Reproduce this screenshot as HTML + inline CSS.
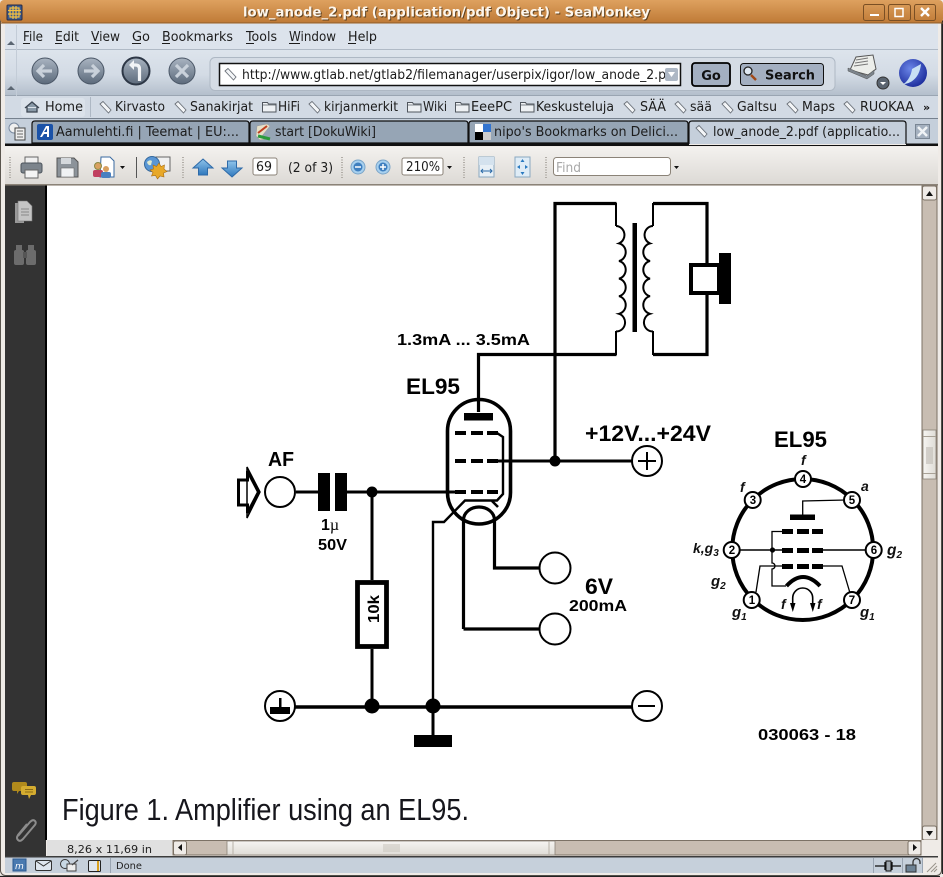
<!DOCTYPE html>
<html><head><meta charset="utf-8"><style>
html,body{margin:0;padding:0;background:#fff;width:943px;height:877px;overflow:hidden}
svg{display:block}
.u{font-family:"DejaVu Sans",sans-serif;font-size:13px;fill:#1c1c1c}
.c{font-family:"Liberation Sans",sans-serif;font-weight:bold;fill:#000}
.i{font-family:"Liberation Sans",sans-serif;font-weight:bold;font-style:italic;fill:#111}
.w{fill:none;stroke:#000;stroke-width:3}
.t{fill:none;stroke:#000;stroke-width:2}
</style></head><body>
<svg width="943" height="877" viewBox="0 0 943 877" xmlns="http://www.w3.org/2000/svg">
<defs>
<linearGradient id="tb" x1="0" y1="0" x2="0" y2="1"><stop offset="0" stop-color="#dea15f"/><stop offset="1" stop-color="#bf7a36"/></linearGradient>
<linearGradient id="nav" x1="0" y1="0" x2="0" y2="1"><stop offset="0" stop-color="#dde4ec"/><stop offset=".55" stop-color="#d3dbe5"/><stop offset="1" stop-color="#b4bfcc"/></linearGradient>
<linearGradient id="pt" x1="0" y1="0" x2="0" y2="1"><stop offset="0" stop-color="#f3f1ee"/><stop offset="1" stop-color="#dcd9d5"/></linearGradient>
<linearGradient id="btn" x1="0" y1="0" x2="0" y2="1"><stop offset="0" stop-color="#a9b4c1"/><stop offset="1" stop-color="#5c6a7b"/></linearGradient>
<linearGradient id="th" x1="0" y1="0" x2="0" y2="1"><stop offset="0" stop-color="#f6f5f2"/><stop offset="1" stop-color="#dfdcd6"/></linearGradient>
<linearGradient id="thv" x1="0" y1="0" x2="1" y2="0"><stop offset="0" stop-color="#f6f5f2"/><stop offset="1" stop-color="#dfdcd6"/></linearGradient>
<radialGradient id="sm" cx=".4" cy=".35" r=".7"><stop offset="0" stop-color="#6b86e8"/><stop offset="1" stop-color="#1a2a9a"/></radialGradient>
<linearGradient id="bl" x1="0" y1="0" x2="0" y2="1"><stop offset="0" stop-color="#8fc4ea"/><stop offset="1" stop-color="#2f78bd"/></linearGradient>
<g id="bm"><path d="M1 3 L4 0.5 L12 9 L9.5 12 Z M3 3 h.1" fill="#f4f6f8" stroke="#6a7078" stroke-width=".9"/></g>
<g id="fd"><path d="M.5 2.5 h5 l1 1.5 h7.5 v8 h-13.5 z" fill="#eef1f4" stroke="#50565e" stroke-width="1"/><path d="M.5 5 h13.5" stroke="#50565e" stroke-width=".7"/></g>
</defs>

<!-- window frame -->
<rect width="943" height="877" fill="#efebe7"/>
<rect x=".5" y=".5" width="941" height="875" rx="5" fill="none" stroke="#5a554e"/>
<path d="M0 876.5 H940 M942.5 20 V874" stroke="#222" stroke-width="1.2"/>

<!-- title bar -->
<rect x="0" y="0" width="943" height="23" rx="4" fill="url(#tb)"/>
<rect x="0" y="22.5" width="943" height="1" fill="#8a5a2a"/>
<rect x="7" y="5" width="15" height="15" rx="1" fill="#3a5a90" stroke="#2a2a40"/>
<path d="M10 8 h9 v9 h-9 z M13 6 v13 M16 6 v13 M8 10.5 h13 M8 14 h13" fill="none" stroke="#f4c040" stroke-width="1.2"/>
<text x="243" y="16.5" font-family="'DejaVu Sans',sans-serif" font-weight="bold" font-size="13" fill="#3b2a14" opacity=".75" textLength="407" lengthAdjust="spacingAndGlyphs" transform="translate(1,1)">low_anode_2.pdf (application/pdf Object) - SeaMonkey</text>
<text x="243" y="16.5" font-family="'DejaVu Sans',sans-serif" font-weight="bold" font-size="13" fill="#fdf6ec" textLength="407" lengthAdjust="spacingAndGlyphs">low_anode_2.pdf (application/pdf Object) - SeaMonkey</text>
<g fill="none" stroke="#f3dcc0">
<rect x="863.5" y="4.5" width="21" height="16" rx="2" stroke="#7a4f24"/><rect x="888.5" y="4.5" width="22" height="16" rx="2" stroke="#7a4f24"/><rect x="914.5" y="4.5" width="21" height="16" rx="2" stroke="#7a4f24"/>
<path d="M870 15 h9" stroke="#fff" stroke-width="2"/>
<rect x="895" y="8.5" width="8" height="8" stroke="#fff" stroke-width="1.5"/>
<path d="M921 8 l8 8 M929 8 l-8 8" stroke="#fff" stroke-width="2.4"/>
</g>

<!-- menu bar -->
<rect x="5" y="24" width="933" height="26" fill="#dce3ec"/>
<rect x="5" y="49" width="933" height="1" fill="#b0bac6"/>
<g class="u" font-size="13">
<text class="u" x="23" y="41" textLength="20" lengthAdjust="spacingAndGlyphs">File</text>
<text class="u" x="55" y="41" textLength="24" lengthAdjust="spacingAndGlyphs">Edit</text>
<text class="u" x="91" y="41" textLength="29" lengthAdjust="spacingAndGlyphs">View</text>
<text class="u" x="132" y="41" textLength="18" lengthAdjust="spacingAndGlyphs">Go</text>
<text class="u" x="162" y="41" textLength="71" lengthAdjust="spacingAndGlyphs">Bookmarks</text>
<text class="u" x="246" y="41" textLength="31" lengthAdjust="spacingAndGlyphs">Tools</text>
<text class="u" x="289" y="41" textLength="47" lengthAdjust="spacingAndGlyphs">Window</text>
<text class="u" x="348" y="41" textLength="29" lengthAdjust="spacingAndGlyphs">Help</text>
</g>
<path d="M23 43.5h7M55 43.5h7M91 43.5h8M132 43.5h9M162 43.5h8M246 43.5h8M289 43.5h11M348 43.5h8" stroke="#1c1c1c"/>

<!-- nav bar -->
<rect x="5" y="50" width="933" height="45" fill="url(#nav)"/>
<rect x="5" y="95" width="933" height="1" fill="#9aa5b2"/>
<g fill="#5b6672"><path d="M7 45 l4-4 4 4z M7 90 l4-4 4 4z M7 114 l4-4 4 4z"/></g>
<path d="M16.500 25 V118" stroke="#c3ccd7"/>
<g stroke="#4a5666" fill="url(#btn)">
<circle cx="45" cy="71" r="13"/><circle cx="91" cy="71" r="13"/><circle cx="136" cy="71" r="13.500" stroke="#2d3746" stroke-width="2"/><circle cx="182" cy="71" r="13"/>
</g>
<g fill="none" stroke="#c9d1da" stroke-width="3.200">
<path d="M52 71 H38 M44 65 l-6 6 6 6"/>
<path d="M84 71 H98 M92 65 l6 6 -6 6"/>
<path d="M176 65 l12 12 M188 65 l-12 12"/>
</g>
<path d="M139.500 81 V69 q0-4 -4-4 h-2" fill="none" stroke="#f2f4f6" stroke-width="3.200"/>
<path d="M129 65 L134 60 V70z" fill="#f2f4f6"/>
<rect x="210" y="57.500" width="625" height="33" rx="5" fill="#d5dce5" stroke="#aeb8c4"/>
<rect x="219.500" y="63.500" width="461" height="22" fill="#fff" stroke="#111" stroke-width="1.500"/>
<use href="#bm" x="224" y="68"/>
<text class="u" x="242" y="79" textLength="424" lengthAdjust="spacingAndGlyphs">http://www.gtlab.net/gtlab2/filemanager/userpix/igor/low_anode_2.p</text>
<rect x="665" y="68" width="13" height="13" rx="2" fill="#aeb8c5"/><path d="M668 72 h7 l-3.500 5z" fill="#fff"/>
<rect x="692" y="63" width="38" height="23" rx="3" fill="#a3afc1" stroke="#000" stroke-width="1.800"/>
<text x="711" y="80" text-anchor="middle" font-family="'DejaVu Sans',sans-serif" font-weight="bold" font-size="13" fill="#111">Go</text>
<rect x="740.500" y="63.500" width="83" height="22" rx="3" fill="#a3afc1" stroke="#111"/>
<circle cx="748" cy="71" r="4" fill="#dfe8f2" stroke="#222" stroke-width="1.300"/><path d="M751 75 l5 5" stroke="#a04818" stroke-width="2.500"/>
<text x="765" y="79.500" font-family="'DejaVu Sans',sans-serif" font-weight="bold" font-size="13" fill="#111" textLength="50" lengthAdjust="spacingAndGlyphs">Search</text>
<path d="M850 70 l6-13 17-2 3 14 -8 6z" fill="#eceeea" stroke="#555"/><path d="M856 60 l12-2 M855 63 l13-2 M854 66 l14-2" stroke="#777"/>
<path d="M848 68 l19 8 7-6 v4 l-7 5 -19-8z" fill="#7c848c" stroke="#555" stroke-width=".5"/>
<circle cx="883" cy="83" r="6" fill="#5a6470" stroke="#333"/><path d="M880 82 h6 l-3 3z" fill="#fff"/>
<circle cx="913" cy="73" r="14" fill="url(#sm)"/>
<path d="M899 86 c8-2 12-10 13-17 l9-5 c-1 10 -6 18 -16 20z" fill="#c8e0f4"/>

<!-- bookmarks bar -->
<rect x="5" y="96" width="933" height="22" fill="#d2dae4"/>
<rect x="21" y="98" width="64" height="19" rx="3" fill="#dbe2ea"/>
<path d="M25 108 l7-6 7 6 M27 107 v5 h10 v-5" fill="#8a9aa8" stroke="#3c4652" stroke-width="1.300"/>
<text class="u" x="45" y="111" textLength="38" lengthAdjust="spacingAndGlyphs">Home</text>
<path d="M90.500 97 V117" stroke="#aeb8c4"/>
<g>
<use href="#bm" x="99" y="101"/><text class="u" x="115" y="111" textLength="50" lengthAdjust="spacingAndGlyphs">Kirvasto</text>
<use href="#bm" x="174" y="101"/><text class="u" x="190" y="111" textLength="63" lengthAdjust="spacingAndGlyphs">Sanakirjat</text>
<use href="#fd" x="262" y="100"/><text class="u" x="278" y="111" textLength="22" lengthAdjust="spacingAndGlyphs">HiFi</text>
<use href="#bm" x="308" y="101"/><text class="u" x="324" y="111" textLength="74" lengthAdjust="spacingAndGlyphs">kirjanmerkit</text>
<use href="#fd" x="407" y="100"/><text class="u" x="423" y="111" textLength="24" lengthAdjust="spacingAndGlyphs">Wiki</text>
<use href="#fd" x="455" y="100"/><text class="u" x="471" y="111" textLength="41" lengthAdjust="spacingAndGlyphs">EeePC</text>
<use href="#fd" x="520" y="100"/><text class="u" x="536" y="111" textLength="78" lengthAdjust="spacingAndGlyphs">Keskusteluja</text>
<use href="#bm" x="623" y="101"/><text class="u" x="640" y="111" textLength="26" lengthAdjust="spacingAndGlyphs">SÄÄ</text>
<use href="#bm" x="674" y="101"/><text class="u" x="690" y="111" textLength="22" lengthAdjust="spacingAndGlyphs">sää</text>
<use href="#bm" x="721" y="101"/><text class="u" x="737" y="111" textLength="40" lengthAdjust="spacingAndGlyphs">Galtsu</text>
<use href="#bm" x="786" y="101"/><text class="u" x="802" y="111" textLength="33" lengthAdjust="spacingAndGlyphs">Maps</text>
<use href="#bm" x="843" y="101"/><text class="u" x="860" y="111" textLength="54" lengthAdjust="spacingAndGlyphs">RUOKAA</text>
<text x="923" y="111" font-family="'DejaVu Sans',sans-serif" font-weight="bold" font-size="11" fill="#111">»</text>
</g>

<!-- tabs -->
<rect x="5" y="118" width="933" height="26" fill="#c5cfdb"/>
<rect x="5" y="118" width="933" height="1" fill="#76818e"/>
<circle cx="14" cy="128" r="5" fill="#f0f0f0" stroke="#7a8aa0"/><rect x="15" y="128" width="10" height="12" fill="#eee" stroke="#444"/><path d="M17 131h6M17 134h6M17 137h6" stroke="#666"/>
<g stroke="#111" stroke-width="1.200">
<path d="M32 143 V124 q0-3 3-3 H246 q3 0 3 3 V143z" fill="#96a5b5"/>
<path d="M250 143 V124 q0-3 3-3 H465 q3 0 3 3 V143z" fill="#96a5b5"/>
<path d="M469 143 V124 q0-3 3-3 H685 q3 0 3 3 V143z" fill="#96a5b5"/>
<path d="M689 144 V124 q0-3 3-3 H903 q3 0 3 3 V144" fill="#c5cfdb"/>
</g>
<rect x="5" y="143.500" width="684" height="2.500" fill="#111"/><rect x="906" y="143.500" width="32" height="2.500" fill="#111"/><rect x="689" y="145" width="217" height="1" fill="#111"/>
<rect x="37" y="124" width="16" height="16" rx="2" fill="#1a52a8"/><path d="M40 137 l6-11 h3 v11 h-2 v-3 h-3 l-2 3z M44 132 h3 v-4z" fill="#fff"/>
<path d="M257 126 l10-2 3 2 -8 10 4 3 -6 1 -4-4z" fill="#e6e0c8" stroke="#999" stroke-width=".5"/><path d="M258 136 l12 3" stroke="#2a9a3a" stroke-width="3"/><path d="M258 133 l9-7" stroke="#c04020" stroke-width="2"/>
<rect x="475" y="124" width="8" height="8" fill="#fff"/><rect x="483" y="124" width="8" height="8" fill="#3274d0"/><rect x="475" y="132" width="8" height="8" fill="#000"/><rect x="483" y="132" width="8" height="8" fill="#ccc"/>
<use href="#bm" x="695" y="125"/>
<text class="u" x="56" y="136" textLength="183" lengthAdjust="spacingAndGlyphs">Aamulehti.fi | Teemat | EU:...</text>
<text class="u" x="275" y="136" textLength="101" lengthAdjust="spacingAndGlyphs">start [DokuWiki]</text>
<text class="u" x="494" y="136" textLength="184" lengthAdjust="spacingAndGlyphs">nipo's Bookmarks on Delici...</text>
<text class="u" x="713" y="136" textLength="187" lengthAdjust="spacingAndGlyphs">low_anode_2.pdf (applicatio...</text>
<rect x="915.500" y="124.500" width="14" height="14" fill="#a4b0bf" stroke="#7a8694"/>
<path d="M918 127 l9 9 M927 127 l-9 9" stroke="#f0f3f6" stroke-width="2.500"/>

<!-- pdf toolbar -->
<rect x="5" y="147" width="933" height="38" fill="url(#pt)"/>
<g fill="none" stroke="#b0aca6" stroke-dasharray="1 1.500" stroke-width="2">
<path d="M10 157 V178 M183 157 V178 M342 157 V178 M464 157 V178 M546 157 V178"/>
</g>
<!-- print -->
<rect x="25" y="157" width="13" height="7" fill="#f0f0f0" stroke="#666"/>
<rect x="21" y="163" width="21" height="10" rx="2" fill="#7c848c" stroke="#4c545c"/>
<rect x="25" y="170" width="13" height="8" fill="#f4f4f4" stroke="#666"/>
<!-- save -->
<path d="M57 158 h17 l4 4 v15 h-21z" fill="#8c939a" stroke="#555"/>
<rect x="61" y="158" width="10" height="6" fill="#d4d8dc"/><rect x="61" y="168" width="13" height="9" fill="#f0f2f4" stroke="#666" stroke-width=".6"/>
<!-- share -->
<path d="M101 157 h9 l4 4 v16 h-14z" fill="#fff" stroke="#3a6aa0"/>
<circle cx="98" cy="166" r="3.500" fill="#d9a060" stroke="#884"/><rect x="93" y="170" width="10" height="7" rx="2" fill="#c04060"/>
<circle cx="106" cy="169" r="3" fill="#d9a060"/><rect x="101" y="172" width="10" height="6" rx="2" fill="#4a80c0"/>
<path d="M120 166 h5 l-2.500 3z" fill="#111"/>
<path d="M136.500 157 V178" stroke="#555"/>
<!-- globe -->
<rect x="156" y="157" width="14" height="14" fill="#f0f0f0" stroke="#666"/>
<circle cx="152" cy="164" r="7.500" fill="#5a96d4" stroke="#33689c"/>
<path d="M147 162 q3-3 5-1 l-1 4 q-3 1 -4-3z" fill="#dfe9d0"/>
<path d="M159 163 l2 3.500 3.500-1.500 -.5 4 3 2.500 -3.500 1.500 .5 4 -4-1 -2.500 3 -2-3.500 -4 .5 1.500-3.500 -3-2.500 3.500-1 -.5-4 3.500 1.500z" fill="#e8a828" stroke="#a86c14" stroke-width=".6"/>
<!-- up / down -->
<path d="M203 159 l10 9 h-5.500 v7 h-9 v-7 h-5.500z" fill="url(#bl)" stroke="#2e6aa8"/>
<path d="M232 177 l10-9 h-5.500 v-7 h-9 v7 h-5.500z" fill="url(#bl)" stroke="#2e6aa8"/>
<rect x="253" y="158" width="24" height="17" rx="2" fill="#fff" stroke="#8b8378"/>
<text class="u" x="256" y="171" textLength="16" lengthAdjust="spacingAndGlyphs">69</text>
<text class="u" x="288" y="172" textLength="45" lengthAdjust="spacingAndGlyphs">(2 of 3)</text>
<circle cx="358" cy="167" r="7" fill="#a8d0ee" stroke="#7aa4c8"/><circle cx="358" cy="167" r="4.500" fill="#3f7fbf"/><path d="M355 167 h6" stroke="#fff" stroke-width="1.500"/>
<circle cx="383" cy="167" r="7" fill="#a8d0ee" stroke="#7aa4c8"/><circle cx="383" cy="167" r="4.500" fill="#3f7fbf"/><path d="M380 167 h6 M383 164 v6" stroke="#fff" stroke-width="1.500"/>
<rect x="402" y="158" width="41" height="17" rx="2" fill="#fff" stroke="#8b8378"/>
<text class="u" x="406" y="171" textLength="34" lengthAdjust="spacingAndGlyphs">210%</text>
<path d="M447 166 h5 l-2.500 3z" fill="#111"/>
<rect x="479" y="157" width="15" height="20" fill="#e8f0f6" stroke="#8aa8c0"/><rect x="479" y="157" width="15" height="8" fill="#d4e2ee"/><path d="M481 171 h11 M483 169 l-2 2 2 2 M490 169 l2 2 -2 2" stroke="#2a6aa8" fill="none"/>
<rect x="515" y="157" width="15" height="20" fill="#dfecf6" stroke="#8aa8c0"/><path d="M522.500 159 l-2 3 h4z M522.500 175 l-2-3 h4z M517 167 l3-2 v4z M528 167 l-3-2 v4z" fill="#2a7ac0"/>
<rect x="553.500" y="157.500" width="117" height="18" rx="3" fill="#fff" stroke="#8b8378"/>
<text x="556" y="172" font-family="'DejaVu Sans',sans-serif" font-size="13" fill="#a8a8a8" textLength="25" lengthAdjust="spacingAndGlyphs">Find</text>
<path d="M674 166 h5 l-2.500 3z" fill="#111"/>

<!-- sidebar -->
<rect x="5" y="185" width="41" height="672" fill="#333"/>
<rect x="45" y="185" width="2" height="655" fill="#000"/>
<rect x="5" y="184" width="933" height="1.500" fill="#8b8378"/>
<path d="M15 203 h9 v20 h-9 z" fill="#999"/>
<path d="M18 201 h9 l5 5 v15 h-14z" fill="#c4c4c4" stroke="#777" stroke-width=".6"/>
<path d="M21 209 h8 M21 212 h8 M21 215 h8" stroke="#888"/>
<g fill="#6c6c6c">
<rect x="14" y="250" width="10" height="15" rx="2"/><rect x="26" y="250" width="10" height="15" rx="2"/>
<rect x="16" y="245" width="6" height="7"/><rect x="28" y="245" width="6" height="7"/><rect x="23" y="252" width="4" height="6" fill="#555"/>
</g>
<path d="M14 782 h11 q2 0 2 2 v5 q0 2 -2 2 h-6 l-2 3 v-3 h-3 q-2 0 -2-2 v-5 q0-2 2-2z" fill="#b08a1c"/>
<path d="M23 786 h11 q2 0 2 2 v5 q0 2 -2 2 h-3 l-2 4 -1-4 h-5 q-2 0 -2-2 v-5 q0-2 2-2z" fill="#d4ac30"/>
<path d="M25 789.500 h8 M25 792 h8" stroke="#8a6a14"/>
<path d="M18 836 l12-14 q3-3 5-1 q2 2 -1 5 l-11 13 q-3 3 -5 1 q-2-2 0-5 l9-11" fill="none" stroke="#8c8c8c" stroke-width="2"/>

<!-- page -->
<rect x="47" y="186" width="875" height="654" fill="#fff"/>

<!-- circuit -->
<g>
<!-- transformer -->
<path d="M555 461 V203.500 H616.500 M653 203.500 H707 V263 M707 294 V354.500 H653 M478.500 412 V354.500 H616.500" fill="none" stroke="#000" stroke-width="3.200"/>
<path d="M616 203 V226 M616 331 V355 M653 203 V226 M653 331 V355" class="t"/>
<path d="M616 226 a8.500 9 0 0 1 3 17.400 a8.500 9 0 0 1 0 17.600 a8.500 9 0 0 1 0 17.600 a8.500 9 0 0 1 0 17.600 a8.500 9 0 0 1 0 17.600 a8.500 9 0 0 1 -3 17.600" class="t"/>
<path d="M653 226 a8.500 9 0 0 0 -3 17.400 a8.500 9 0 0 0 0 17.600 a8.500 9 0 0 0 0 17.600 a8.500 9 0 0 0 0 17.600 a8.500 9 0 0 0 0 17.600 a8.500 9 0 0 0 3 17.600" class="t"/>
<rect x="632.500" y="223" width="4.500" height="109" fill="#000"/>
<rect x="691" y="265" width="28" height="28" fill="#fff" stroke="#000" stroke-width="4"/>
<rect x="719" y="253" width="12" height="51" fill="#000"/>
<!-- tube -->
<rect x="447.500" y="399.500" width="63" height="124.500" rx="31.500" fill="none" stroke="#000" stroke-width="3.600"/>
<rect x="464" y="413" width="29" height="7.500" fill="#000"/>
<g fill="#000">
<rect x="455" y="431" width="11" height="4"/><rect x="471" y="431" width="12" height="4"/><rect x="487" y="431" width="11" height="4"/>
<rect x="455" y="459" width="11" height="4"/><rect x="471" y="459" width="12" height="4"/><rect x="487" y="459" width="11" height="4"/>
<rect x="455" y="490" width="11" height="4"/><rect x="471" y="490" width="12" height="4"/><rect x="487" y="490" width="11" height="4"/>
</g>
<path d="M497 433 l6 4 V494 l-6 6.500 H465 L444 522 H433 V707" fill="none" stroke="#000" stroke-width="2.400"/>
<path d="M492 501 l6 6" fill="none" stroke="#000" stroke-width="2.600"/>
<path d="M494 461 H632" class="w"/>
<path d="M296 492 H318 M347 492 H455" class="w"/>
<rect x="318" y="473" width="12" height="38" fill="#000"/><rect x="335" y="473" width="12" height="38" fill="#000"/>
<circle cx="555" cy="461" r="5.500" fill="#000"/><circle cx="372" cy="492" r="5.500" fill="#000"/>
<circle cx="280" cy="492" r="15" fill="#fff" stroke="#000" stroke-width="2"/>
<path d="M238.500 480 h9 v-9 l11 21 -11 21 v-8 h-9z" fill="#fff" stroke="#000" stroke-width="3"/>
<path d="M247 467 l13 25 -13 26z" fill="none" stroke="#000" stroke-width="1.500"/>
<path d="M463.500 629 V520 a15.500 13 0 0 1 31 0 V568 H540 M463.500 629 H540" fill="none" stroke="#000" stroke-width="3.200"/>
<circle cx="555" cy="568" r="15.500" fill="#fff" stroke="#000" stroke-width="2"/>
<circle cx="555" cy="629" r="15.500" fill="#fff" stroke="#000" stroke-width="2"/>
<circle cx="647" cy="461" r="15" fill="#fff" stroke="#000" stroke-width="2"/>
<path d="M638 461 h18 M647 452 v18" stroke="#000" stroke-width="2"/>
<!-- resistor -->
<path d="M372 492 V580 M372 649 V706" class="w"/>
<rect x="357.500" y="582.500" width="29" height="64" fill="#fff" stroke="#000" stroke-width="4.800"/>
<text class="c" font-size="15.500" transform="translate(379,623) rotate(-90)" textLength="28" lengthAdjust="spacingAndGlyphs">10k</text>
<!-- bottom rail -->
<path d="M295 707 H632" stroke="#000" stroke-width="3.600"/>
<circle cx="372" cy="706" r="7.500" fill="#000"/><circle cx="433" cy="706" r="7.500" fill="#000"/>
<path d="M433 706 V736" class="w"/>
<rect x="414" y="735" width="38" height="12" fill="#000"/>
<circle cx="280" cy="706" r="15" fill="#fff" stroke="#000" stroke-width="2"/>
<rect x="270" y="707" width="20" height="7" fill="#000"/><rect x="279" y="698" width="2.500" height="10" fill="#000"/>
<circle cx="647" cy="706" r="15" fill="#fff" stroke="#000" stroke-width="2"/>
<path d="M638 706 h17" stroke="#000" stroke-width="2"/>
<!-- labels -->
<text class="c" x="397" y="345" font-size="16" textLength="133" lengthAdjust="spacingAndGlyphs">1.3mA ... 3.5mA</text>
<text class="c" x="406" y="394" font-size="22" textLength="54" lengthAdjust="spacingAndGlyphs">EL95</text>
<text class="c" x="268" y="466" font-size="20" textLength="26" lengthAdjust="spacingAndGlyphs">AF</text>
<text x="321" y="530" font-size="16"><tspan class="c">1</tspan><tspan font-family="'Liberation Serif',serif" fill="#000">µ</tspan></text>
<text class="c" x="318" y="550" font-size="16" textLength="29" lengthAdjust="spacingAndGlyphs">50V</text>
<text class="c" x="585" y="441" font-size="22" textLength="126" lengthAdjust="spacingAndGlyphs">+12V...+24V</text>
<text class="c" x="585" y="594" font-size="22" textLength="28" lengthAdjust="spacingAndGlyphs">6V</text>
<text class="c" x="569" y="611" font-size="16" textLength="58" lengthAdjust="spacingAndGlyphs">200mA</text>
<text class="c" x="758" y="740" font-size="16" textLength="98" lengthAdjust="spacingAndGlyphs">030063 - 18</text>
<text class="c" x="774" y="447" font-size="22" textLength="53" lengthAdjust="spacingAndGlyphs">EL95</text>
<!-- pinout -->
<circle cx="802.700" cy="549.500" r="70.500" fill="none" stroke="#000" stroke-width="4"/>
<g fill="#000">
<rect x="790" y="514.500" width="25" height="5.500"/>
<rect x="782" y="529" width="11" height="5"/><rect x="797" y="529" width="12" height="5"/><rect x="812" y="529" width="11" height="5"/>
<rect x="782" y="548" width="11" height="5"/><rect x="797" y="548" width="12" height="5"/><rect x="812" y="548" width="11" height="5"/>
<rect x="782" y="564" width="11" height="5"/><rect x="797" y="564" width="12" height="5"/><rect x="812" y="564" width="11" height="5"/>
</g>
<path d="M802.700 515 V501 L846 500" fill="none" stroke="#000" stroke-width="1.300"/>
<path d="M739 550 H782 M823 550 H866" fill="none" stroke="#000" stroke-width="1.400"/>
<path d="M782 531.500 H772 V563 a3 3 0 0 1 0 6 V586 H786" fill="none" stroke="#000" stroke-width="1.300"/>
<circle cx="772.500" cy="550" r="2.600" fill="#000"/>
<path d="M756 592 L760 566 H782 M823 566 H842 L850 593" fill="none" stroke="#000" stroke-width="1.300"/>
<path d="M786.500 586 Q803 568 820 586" fill="none" stroke="#000" stroke-width="4"/>
<path d="M792.700 604 V598 a10 10 0 0 1 20 0 V604" fill="none" stroke="#000" stroke-width="1.600"/>
<path d="M790 603 h5.500 l-2.700 9z M810 603 h5.500 l-2.700 9z" fill="#000"/>
<g fill="#fff" stroke="#000" stroke-width="2">
<circle cx="803" cy="479" r="8"/><circle cx="752.700" cy="500" r="8"/><circle cx="852" cy="500" r="8"/>
<circle cx="731.700" cy="550" r="8"/><circle cx="873.700" cy="550" r="8"/><circle cx="751.700" cy="600" r="8"/><circle cx="852" cy="600" r="8"/>
</g>
<g class="c" font-size="11.500" font-weight="normal" text-anchor="middle" font-family="'Liberation Sans',sans-serif">
<text x="803" y="483">4</text><text x="753" y="504">3</text><text x="852" y="504">5</text><text x="732" y="554">2</text><text x="874" y="554">6</text><text x="752" y="604">1</text><text x="852" y="604">7</text>
</g>
<g font-size="14">
<text class="i" x="801" y="465">f</text><text class="i" x="740" y="492">f</text><text class="i" x="861" y="491">a</text>
<text class="i" x="693" y="553">k,g<tspan font-size="10" dy="3">3</tspan></text>
<text class="i" x="887" y="555" font-size="15.500">g<tspan font-size="10" dy="3">2</tspan></text>
<text class="i" x="711" y="586" font-size="15">g<tspan font-size="10" dy="3">2</tspan></text>
<text class="i" x="732" y="617" font-size="15">g<tspan font-size="10" dy="3">1</tspan></text>
<text class="i" x="860" y="617" font-size="15">g<tspan font-size="10" dy="3">1</tspan></text>
<text class="i" x="781" y="609">f</text><text class="i" x="817" y="609">f</text>
</g>
</g>
<text x="62" y="820" font-family="'Liberation Sans',sans-serif" font-size="31" fill="#16161c" textLength="407" lengthAdjust="spacingAndGlyphs">Figure 1. Amplifier using an EL95.</text>

<!-- vertical scrollbar -->
<rect x="922" y="186" width="15" height="654" fill="#c8bdb2" stroke="#7c7266"/>
<rect x="922.500" y="186" width="14" height="14" rx="2" fill="#efebe7" stroke="#7c7266"/><path d="M926 196 h7 l-3.500-5z" fill="#111"/>
<rect x="922.500" y="826" width="14" height="14" rx="2" fill="#efebe7" stroke="#7c7266"/><path d="M926 831 h7 l-3.500 5z" fill="#111"/>
<rect x="923" y="430" width="13" height="49" fill="url(#thv)" stroke="#8b8378" stroke-width=".8"/>
<path d="M923 436.500 H936 M923 473.500 H936" stroke="#a8a196"/>
<g fill="#c0bbb4"><rect x="926" y="447" width="7" height="17" opacity=".6"/></g>

<!-- horizontal scrollbar row -->
<rect x="47" y="840" width="891" height="16" fill="#efebe7"/>
<rect x="47" y="840" width="125" height="16" fill="#e0e0e0"/>
<text x="67" y="853" font-family="'DejaVu Sans',sans-serif" font-size="11" fill="#222" textLength="85" lengthAdjust="spacingAndGlyphs">8,26 x 11,69 in</text>
<rect x="173" y="840.500" width="748" height="14.500" fill="#c8bdb2" stroke="#7c7266"/>
<rect x="173.500" y="841" width="13" height="14" rx="2" fill="#efebe7" stroke="#7c7266"/><path d="M182 844 v7 l-4-3.500z" fill="#111"/>
<rect x="908" y="841" width="13" height="14" rx="2" fill="#efebe7" stroke="#7c7266"/><path d="M913 844 v7 l4-3.500z" fill="#111"/>
<rect x="227" y="841" width="328" height="14" fill="url(#th)" stroke="#8b8378" stroke-width=".8"/>
<path d="M233 841 V855 M549 841 V855" stroke="#b8b2a8"/>
<rect x="383" y="844" width="17" height="8" fill="#c8c3bb" opacity=".5"/>

<!-- status bar -->
<rect x="5" y="856" width="933" height="1.500" fill="#3c3c3c"/>
<rect x="5" y="857.500" width="933" height="15.500" fill="#c6d0db"/>
<rect x="13" y="859" width="13" height="12" fill="#4a7ab0" stroke="#2c5a90"/>
<text x="15" y="869" font-family="'DejaVu Sans',sans-serif" font-size="9" font-style="italic" fill="#fff">m</text>
<rect x="35.500" y="860.500" width="16" height="10" rx="1.500" fill="#dfe6ee" stroke="#333"/><path d="M36 861 l7.500 5 7.500-5" fill="none" stroke="#333"/>
<circle cx="65" cy="864" r="4.500" fill="#c8d8e4" stroke="#333"/><rect x="67" y="864" width="9" height="7" fill="#eee" stroke="#444"/><path d="M72 865 l6-5" stroke="#444" stroke-width="1.200"/>
<rect x="88.500" y="860.500" width="12" height="11" rx="1" fill="#dfe6ee" stroke="#222"/><path d="M98 861 v10" stroke="#d8a020" stroke-width="2"/>
<path d="M110.500 858 V873" stroke="#9aa5b2"/>
<text x="116" y="869" font-family="'DejaVu Sans',sans-serif" font-size="10" fill="#222" textLength="26" lengthAdjust="spacingAndGlyphs">Done</text>
<path d="M873.500 858 V873 M902.500 858 V873 M922.500 858 V873" stroke="#9aa5b2"/>
<path d="M875 866 h10 M892 866 h9 M885 862 v8 M892 862 v8" stroke="#111" stroke-width="1.300"/><rect x="886" y="861" width="5" height="10" fill="#a0a8b0" stroke="#111"/>
<rect x="906" y="865" width="10" height="7" fill="#6d8294" stroke="#333"/><path d="M913 865 v-3 a3 3 0 0 1 7 0 v2" fill="none" stroke="#333" stroke-width="1.300"/>
<rect x="923" y="857.500" width="15" height="16" fill="#efebe7"/>
<path d="M927 872 l9-9 M931 872 l6-6 M934 872 l3-3" stroke="#9a958c"/>
</svg>
</body></html>
